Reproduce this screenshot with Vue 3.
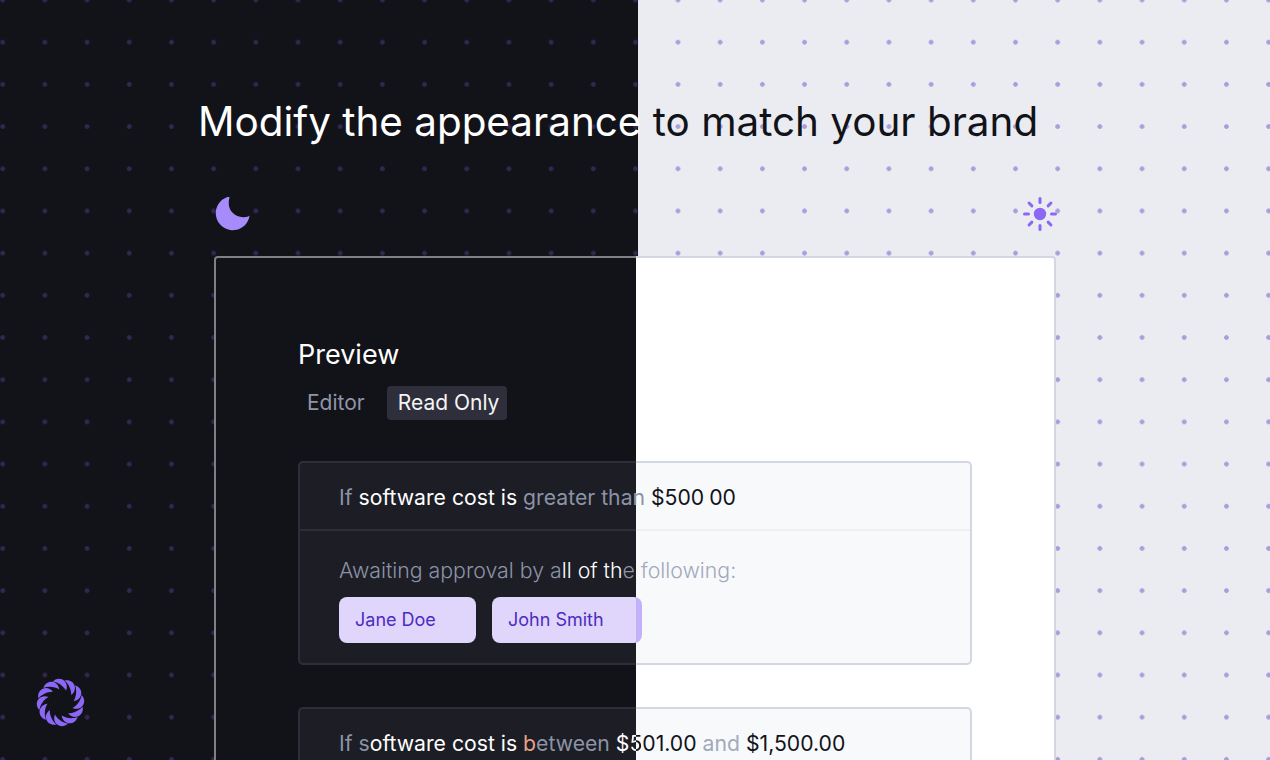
<script setup>
const petals = Array.from({ length: 12 }, (_, i) => i * 30)
const rays = Array.from({ length: 8 }, (_, i) => i * 45)
</script>

<template>
  <div class="stage">
    <div class="panel panel-dark"></div>
    <div class="panel panel-light"></div>

    <main class="content">
      <h1 class="title">
        <span class="on-dark">Modify the appearance</span> <span class="on-light">to match your brand</span>
      </h1>

      <div class="modes">
        <svg class="moon" width="36" height="36" viewBox="0 0 36 36">
          <path d="M11.4 1.4A17 17 0 1 0 34.6 19.6C33.6 20.6 31 21.4 28 21.2C20 20.8 14 15 13.8 8C13.7 5.4 14 2.8 14.6 1.4C13.6 .9 12.4 .9 11.4 1.4Z" />
        </svg>
        <svg class="sun" width="36" height="36" viewBox="-18 -18 36 36">
          <circle r="6.2" />
          <line v-for="a in rays" :key="a" x1="0" y1="-11.5" x2="0" y2="-15.5" :transform="`rotate(${a})`" />
        </svg>
      </div>

      <section class="card">
        <h2 class="heading">Preview</h2>
        <div class="tabs">
          <span class="tab">Editor</span>
          <span class="tab tab-active">Read Only</span>
        </div>

        <article class="rule">
          <div class="rule-head">
            <span class="dim">If </span><span class="bright">software cost is </span><span class="dim">greater than </span><span class="ink">$500</span><span class="white">.</span><span class="ink">00</span>
          </div>
          <div class="rule-body">
            <p class="await">
              <span class="dim">Awaiting approval by a</span><span class="bright">ll of th</span><span class="dim">e </span><span class="soft">following:</span>
            </p>
            <div class="chips">
              <span class="chip">Jane Doe</span>
              <span class="chip chip-split">John Smith</span>
            </div>
          </div>
        </article>

        <article class="rule rule-second">
          <div class="rule-head">
            <span class="dim">If s</span><span class="bright">oftware cost is </span><span class="orange">b</span><span class="dim">etween </span><span class="bright">$</span><span class="split-glyph">5</span><span class="ink">01.00</span><span class="soft"> and </span><span class="ink">$1,500.00</span>
          </div>
        </article>
      </section>
    </main>

    <svg class="logo" width="50" height="50" viewBox="-24.5 -24.5 50 50">
      <path
        v-for="a in petals"
        :key="a"
        d="M-8 1.8C-6 -7.6 6 -7.6 8 1.8C3.5 -.6 -3.5 -.6 -8 1.8Z"
        :transform="`rotate(${a}) translate(0 -18) rotate(35)`"
      />
    </svg>
  </div>
</template>

<style>
html, body { margin: 0; background: #121319; }
</style>

<style scoped>
.stage {
  position: relative;
  width: 1270px;
  height: 760px;
  overflow: hidden;
  font-family: Inter, "Liberation Sans", sans-serif;
}
.panel {
  position: absolute;
  top: 0;
  bottom: 0;
  background-size: 42.2px 42.2px;
}
.panel-dark {
  left: 0;
  width: 638px;
  background-color: #121319;
  background-image: radial-gradient(circle, #332651 2px, transparent 2.6px);
  background-position: -18.4px -21.1px;
}
.panel-light {
  left: 638px;
  right: 0;
  background-color: #ebecf1;
  background-image: radial-gradient(circle, #ad9bdc 2px, transparent 2.6px);
  background-position: 18.9px -21.1px;
}
.content {
  position: relative;
  width: 842px;
  margin-left: 214px;
  padding-top: 97px;
}
.title {
  margin: 0 0 0 -16px;
  font-size: 40.4px;
  line-height: 50px;
  font-weight: 400;
  white-space: nowrap;
}
.on-dark { color: #fff; }
.on-light { color: #121319; }
.modes {
  display: flex;
  justify-content: space-between;
  align-items: center;
  height: 36px;
  margin-top: 49px;
}
.moon { fill: #a78bfa; margin-left: 1px; }
.sun {
  fill: #8b67f5;
  stroke: #8b67f5;
  stroke-width: 3;
  stroke-linecap: round;
  margin-right: -2px;
}
.sun circle { stroke: none; }
.card {
  box-sizing: border-box;
  width: 842px;
  height: 620px;
  margin-top: 24px;
  padding: 78px 82px 0;
  border: 2px solid transparent;
  border-radius: 4px;
  background:
    linear-gradient(90deg, #121319 420px, #fff 420px) padding-box,
    linear-gradient(90deg, #7f8085 422px, #d3d6e3 422px) border-box;
}
.heading {
  margin: 0;
  font-size: 27px;
  line-height: 38px;
  font-weight: 400;
  color: #fff;
}
.tabs {
  display: flex;
  align-items: center;
  gap: 13px;
  margin-top: 12px;
}
.tab {
  padding: 0 9px;
  height: 34px;
  line-height: 34px;
  border-radius: 4px;
  font-size: 21px;
  color: #8f96a8;
}
.tab-active {
  padding: 0 8px 0 11px;
  background: #2e2f3b;
  color: #f4f4f7;
}
.rule {
  box-sizing: border-box;
  width: 674px;
  height: 204px;
  margin-top: 41px;
  border: 2px solid transparent;
  border-radius: 5px;
  background:
    linear-gradient(90deg, #1c1d25 336px, #f8f9fb 336px) padding-box,
    linear-gradient(90deg, #2d2e38 338px, #d3d7e3 338px) border-box;
}
.rule-second { margin-top: 42px; }
.rule-head {
  box-sizing: border-box;
  height: 68px;
  padding: 0 39px;
  line-height: 68px;
  font-size: 21.2px;
  white-space: pre-wrap;
  background: linear-gradient(90deg, #2d2e38 336px, #eef0f4 336px) bottom / 100% 2px no-repeat;
}
.rule-body { padding: 25px 39px 0; }
.await {
  margin: 0;
  height: 28px;
  line-height: 28px;
  font-size: 21.3px;
  font-weight: 300;
  white-space: pre-wrap;
}
.dim { color: #8c93a5; }
.soft { color: #a1a9bc; }
.bright { color: #fff; }
.white { color: #fff; }
.ink { color: #121319; }
.orange { color: #e9a184; }
.split-glyph {
  color: transparent;
  background: linear-gradient(90deg, #fff 55%, #121319 55%);
  -webkit-background-clip: text;
  background-clip: text;
}
.chips {
  display: flex;
  gap: 16px;
  margin-top: 13px;
}
.chip {
  box-sizing: border-box;
  width: 137px;
  height: 46px;
  padding: 0 16px;
  line-height: 46px;
  border-radius: 8px;
  background: #e0d5fb;
  color: #4c2cc0;
  font-size: 18px;
}
.chip-split {
  width: 150px;
  background: linear-gradient(90deg, #e0d5fb 144px, #c3b0fa 144px);
}
.logo {
  position: absolute;
  left: 36px;
  top: 678px;
  fill: #8b67f5;
}
</style>
